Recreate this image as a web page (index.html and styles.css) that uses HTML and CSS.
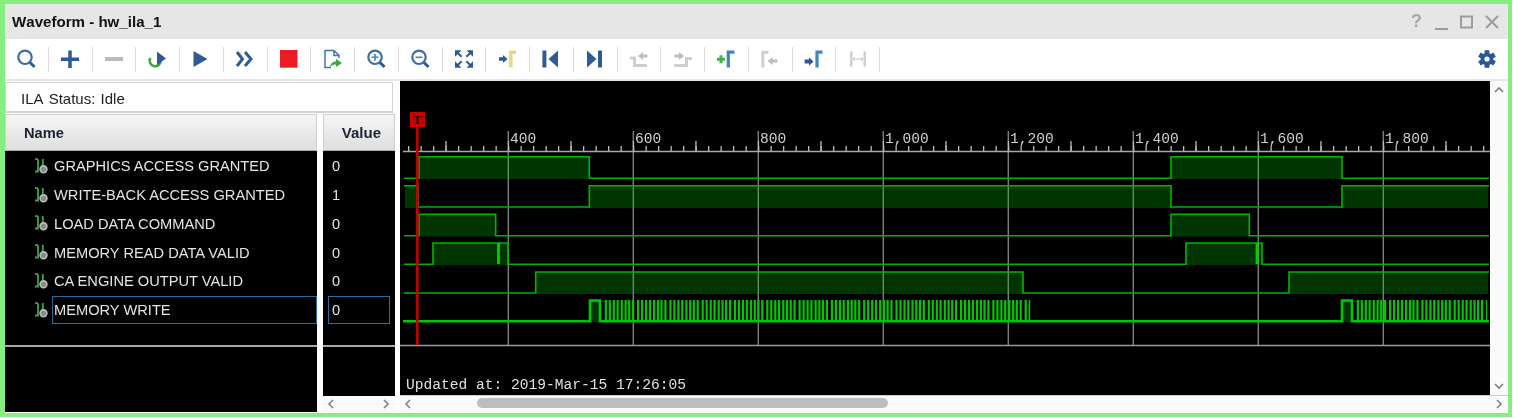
FILE: index.html
```html
<!DOCTYPE html>
<html lang="en">
<head>
<meta charset="utf-8">
<title>Waveform - hw_ila_1</title>
<link rel="stylesheet" href="styles.css">
</head>
<body>
<svg class="defs" aria-hidden="true">
  <symbol id="sig" viewBox="0 0 17 17">
    <path class="sig-g" d="M0 13.5H3V1.2M0 1.2H3M7.8 1V8"/>
    <circle class="sig-c" cx="8.5" cy="11.3" r="3.4"/>
  </symbol>
  <symbol id="mag" viewBox="0 0 22 22">
    <circle class="i-lens" cx="10" cy="9.3" r="6.7"/>
    <path class="i-handle" d="M15 14.5L19.5 19"/>
  </symbol>
  <symbol id="corner" viewBox="0 0 22 22">
    <path class="i-navy" d="M2 2.2H8.5L2 8.7z"/>
    <path class="i-navy-l" d="M4 4.2L8.6 8.8"/>
  </symbol>
</svg>
<div class="window">
  <header class="title">
    <span class="title-text">Waveform - hw_ila_1</span>
    <div class="controls">
      <span class="help">?</span>
      <svg class="ctl" viewBox="0 0 25 22"><path d="M6 18H19"/></svg>
      <svg class="ctl" viewBox="0 0 25 22"><rect x="7" y="5.5" width="11" height="11"/></svg>
      <svg class="ctl" viewBox="0 0 25 22"><path d="M7 5L19 17M19 5L7 17"/></svg>
    </div>
  </header>
  <nav class="toolbar">
    <div class="tool"><svg class="ic" viewBox="0 0 22 22"><use href="#mag"/></svg></div>
    <div class="tool"><svg class="ic" viewBox="0 0 22 22"><path class="i-stroke" d="M2 11.3H20M11 2.5V20"/></svg></div>
    <div class="tool"><svg class="ic" viewBox="0 0 22 22"><rect class="i-gray" x="2" y="9" width="18" height="4"/></svg></div>
    <div class="tool"><svg class="ic" viewBox="0 0 22 22"><path class="i-green-l" d="M13.6 12A5.5 5.5 0 1 1 3.4 10"/><path class="i-navy" d="M10 3.5L19 10.5L10 17z"/></svg></div>
    <div class="tool"><svg class="ic" viewBox="0 0 22 22"><path class="i-navy" d="M3.5 3L17.5 11L3.5 19z"/></svg></div>
    <div class="tool"><svg class="ic" viewBox="0 0 22 22"><path class="i-chev" d="M3 4L8.5 11L3 18M11 4L17 11L11 18"/></svg></div>
    <div class="tool"><svg class="ic" viewBox="0 0 22 22"><rect class="i-red" x="2" y="2" width="17.5" height="17.7"/></svg></div>
    <div class="tool"><svg class="ic" viewBox="0 0 22 22"><path class="i-page" d="M9 19.5H3V2.5H12L17 7.5V10M12 2.5V7.5H17"/><path class="i-green" d="M8 19C8.5 15.5 11 13.5 14 13.5V11L20 15L14 19V16.5C12 16.5 10 17 8 19z"/></svg></div>
    <div class="tool"><svg class="ic" viewBox="0 0 22 22"><use href="#mag"/><path class="i-thin" d="M6.5 9.3H13.5M10 5.8V12.8"/></svg></div>
    <div class="tool"><svg class="ic" viewBox="0 0 22 22"><use href="#mag"/><path class="i-thin" d="M6.5 9.3H13.5"/></svg></div>
    <div class="tool"><svg class="ic" viewBox="0 0 22 22"><use href="#corner"/><use href="#corner" transform="matrix(-1 0 0 1 22 0)"/><use href="#corner" transform="matrix(1 0 0 -1 0 22)"/><use href="#corner" transform="matrix(-1 0 0 -1 22 22)"/></svg></div>
    <div class="tool"><svg class="ic" viewBox="0 0 22 22"><path class="i-navy" d="M2 9.3H6V7L10.5 11L6 15V12.7H2z"/><path class="i-yellow" d="M13.8 19.5V4.2H19"/></svg></div>
    <div class="tool"><svg class="ic" viewBox="0 0 22 22"><rect class="i-navy" x="2.4" y="2.5" width="4" height="17"/><path class="i-navy" d="M18 2.5V19.5L8.5 11z"/></svg></div>
    <div class="tool"><svg class="ic" viewBox="0 0 22 22"><path class="i-navy" d="M3 2.5V19.5L12.5 11z"/><rect class="i-navy" x="14" y="2.5" width="4" height="17"/></svg></div>
    <div class="tool"><svg class="ic" viewBox="0 0 22 22"><path class="i-gray-l" d="M2 10H6.5V17.5H19"/><path class="i-lgray" d="M19.5 6.5H15V4L10 8L15 12V9.5H19.5z"/></svg></div>
    <div class="tool"><svg class="ic" viewBox="0 0 22 22"><path class="i-gray-l" d="M2 17.5H14.5V10.5H20"/><path class="i-lgray" d="M2.5 6.5H7V4L12 8L7 12V9.5H2.5z"/></svg></div>
    <div class="tool"><svg class="ic" viewBox="0 0 22 22"><path class="i-plus" d="M2 11.3H10M6 7.3V15.3"/><path class="i-blue" d="M13.3 19.5V4.2H19.5"/></svg></div>
    <div class="tool"><svg class="ic" viewBox="0 0 22 22"><path class="i-gray-l" d="M3.8 19.5V4.2H9.5"/><path class="i-lgray" d="M18.5 11.5H13.5V9L8.5 13L13.5 17V14.5H18.5z"/></svg></div>
    <div class="tool"><svg class="ic" viewBox="0 0 22 22"><path class="i-navy" d="M1.6 11.5H6V9.2L10.5 13.5L6 17.8V15.5H1.6z"/><path class="i-blue" d="M14 19.5V4.2H19.5"/></svg></div>
    <div class="tool"><svg class="ic" viewBox="0 0 22 22"><path class="i-gray-m" d="M3 3.5H5.5V18.5H3zM16.5 3.5H19V18.5H16.5z"/><path class="i-gray-t" d="M6 11H16M8 9L6 11L8 13M14 9L16 11L14 13"/></svg></div>
    <svg class="gear" viewBox="0 0 18 18">
      <g class="gear-teeth"><rect x="6.6" y="0.2" width="4.8" height="17.6"/><rect x="6.6" y="0.2" width="4.8" height="17.6" transform="rotate(60 9 9)"/><rect x="6.6" y="0.2" width="4.8" height="17.6" transform="rotate(120 9 9)"/></g>
      <circle class="gear-body" cx="9" cy="9" r="6.3"/>
      <circle class="gear-hole" cx="9" cy="9" r="2.6"/>
    </svg>
  </nav>
  <main class="main">
    <section class="left">
      <div class="status">ILA Status: Idle</div>
      <div class="cols">
        <div class="col col-name">
          <div class="head head-name">Name</div>
          <div class="list">
            <div class="row"><svg class="sig"><use href="#sig"/></svg><span class="label">GRAPHICS ACCESS GRANTED</span></div>
            <div class="row"><svg class="sig"><use href="#sig"/></svg><span class="label">WRITE-BACK ACCESS GRANTED</span></div>
            <div class="row"><svg class="sig"><use href="#sig"/></svg><span class="label">LOAD DATA COMMAND</span></div>
            <div class="row"><svg class="sig"><use href="#sig"/></svg><span class="label">MEMORY READ DATA VALID</span></div>
            <div class="row"><svg class="sig"><use href="#sig"/></svg><span class="label">CA ENGINE OUTPUT VALID</span></div>
            <div class="row"><svg class="sig"><use href="#sig"/></svg><span class="label selected">MEMORY WRITE</span></div>
            <div class="divider"></div>
          </div>
        </div>
        <div class="col col-value">
          <div class="head head-value">Value</div>
          <div class="list">
            <div class="row vrow"><span class="cell">0</span></div>
            <div class="row vrow"><span class="cell">1</span></div>
            <div class="row vrow"><span class="cell">0</span></div>
            <div class="row vrow"><span class="cell">0</span></div>
            <div class="row vrow"><span class="cell">0</span></div>
            <div class="row vrow"><span class="cell selected">0</span></div>
            <div class="divider"></div>
          </div>
          <div class="hbar hbar-small">
            <svg class="chev" viewBox="0 0 16 16"><path d="M10 4L6 8L10 12"/></svg>
            <svg class="chev" viewBox="0 0 16 16"><path d="M6 4L10 8L6 12"/></svg>
          </div>
        </div>
      </div>
    </section>
    <section class="wavecol">
      <div class="waverow">
        <svg class="wave" viewBox="400 81 1090 314">
          <path class="grid" d="M508.3 131V345M633.3 131V345M758.3 131V345M883.3 131V345M1008.3 131V345M1133.3 131V345M1258.3 131V345M1383.3 131V345"/>
          <path class="axis" d="M403 151.5H1490"/>
          <line class="tick" x1="408" y1="148.5" x2="1490" y2="148.5"/>
          <line class="tick-big" x1="445.3" y1="146" x2="1490" y2="146"/>
          <g class="ruler">
            <text x="510" y="143">400</text>
            <text x="635" y="143">600</text>
            <text x="760" y="143">800</text>
            <text x="885" y="143">1,000</text>
            <text x="1010" y="143">1,200</text>
            <text x="1135" y="143">1,400</text>
            <text x="1260" y="143">1,600</text>
            <text x="1385" y="143">1,800</text>
          </g>
          <path class="fill" d="M419 157H589V179H419zM1171 157H1342V179H1171zM405 186H418V208H405zM589 186H1171V208H589zM1342 186H1488V208H1342zM419 214.5H496V236.5H419zM1171 214.5H1249V236.5H1171zM433 243H508V265H433zM1186 243H1262V265H1186zM536 272H1023V294H536zM1289 272H1488V294H1289zM590 300H600V322H590zM1342 300H1352V322H1342z"/>
          <path class="trace" d="M404 178.3H419V156.8H589.3V178.3H1171V156.8H1342V178.3H1489"/>
          <path class="trace" d="M404 185.7H418V207H589.3V185.7H1171V207H1342V185.7H1489"/>
          <path class="trace" d="M404 235.7H419V214.3H495.7V235.7H1171V214.3H1249.3V235.7H1489"/>
          <path class="trace" d="M404 264.3H433V243H508V264.3H1186V243H1262V264.3H1489"/>
          <path class="trace" d="M404 293H535.7V272H1023V293H1289V272H1489"/>
          <path class="glitch" d="M498.5 243V264M1257 243V264"/>
          <path class="trace-bold" d="M403 321.3H590V300.5H600V321.3H1342V300.5H1352V321.3H1489"/>
          <line class="burst" x1="604.7" y1="310.5" x2="1030.2" y2="310.5"/>
          <line class="burst" x1="1356.7" y1="310.5" x2="1487.2" y2="310.5"/>
          <path class="base" d="M400 345.5H1490"/>
          <rect class="cursor-flag" x="410" y="112" width="15" height="15"/>
          <text class="cursor-t" x="417.5" y="124">T</text>
          <path class="cursor" d="M417.3 127V345"/>
          <text class="updated" x="406" y="389">Updated at: 2019-Mar-15 17:26:05</text>
        </svg>
        <div class="vbar">
          <svg class="chev" viewBox="0 0 16 16"><path d="M4 10L8 6L12 10"/></svg>
          <svg class="chev" viewBox="0 0 16 16"><path d="M4 6L8 10L12 6"/></svg>
        </div>
      </div>
      <div class="hbar">
        <svg class="chev" viewBox="0 0 16 16"><path d="M10 4L6 8L10 12"/></svg>
        <div class="thumb"></div>
        <svg class="chev chev-end" viewBox="0 0 16 16"><path d="M6 4L10 8L6 12"/></svg>
      </div>
    </section>
  </main>
</div>
</body>
</html>
```
FILE: styles.css
```css
* { box-sizing: border-box; }
html, body { margin: 0; padding: 0; background: #fff; }
body { font-family: "Liberation Sans", Arial, sans-serif; overflow: hidden; }
.defs { display: none; }

.window {
  width: 1512px;
  height: 417px;
  display: flex;
  flex-direction: column;
  border-style: solid;
  border-color: #86ee7f;
  border-width: 4px 4px 4px 5px;
  background: #fff;
  filter: blur(0.4px);
}

.title {
  height: 35px;
  flex: none;
  background: #e6e6e6;
  display: flex;
  align-items: center;
  justify-content: space-between;
  padding: 0 4px 0 7px;
}
.title-text { font-weight: bold; font-size: 15.1px; font-kerning: none; color: #111; }
.controls { display: flex; align-items: center; }
.help { width: 25px; text-align: center; font-weight: bold; font-size: 18px; color: #a8a8a8; }
.ctl { width: 25px; height: 22px; fill: none; stroke: #9c9c9c; stroke-width: 2; }

.toolbar {
  height: 40px;
  flex: none;
  display: flex;
  align-items: center;
  background: #fff;
}
.tool {
  width: 43.75px;
  height: 25px;
  flex: none;
  display: flex;
  align-items: center;
  justify-content: center;
  border-right: 1px solid #dcdcdc;
}
.ic { width: 22px; height: 22px; flex: none; overflow: visible; }
.gear { width: 18px; height: 18px; margin-left: auto; margin-right: 12px; }
.gear-teeth { fill: #2c5796; }
.gear-body { fill: #2c5796; }
.gear-hole { fill: #fff; }

.i-lens { fill: none; stroke: #3b6ea5; stroke-width: 2.2; }
.i-handle { fill: none; stroke: #2f5a96; stroke-width: 3; }
.i-thin { fill: none; stroke: #4b7fae; stroke-width: 1.6; }
.i-stroke { fill: none; stroke: #2f5a96; stroke-width: 3.5; }
.i-gray { fill: #bbb; }
.i-lgray { fill: #bdbdbd; }
.i-gray-l { fill: none; stroke: #cfcfcf; stroke-width: 3; }
.i-gray-m { fill: #cfcfcf; }
.i-gray-t { fill: none; stroke: #c4c4c4; stroke-width: 1; }
.i-green { fill: #3ca83c; }
.i-green-l { fill: none; stroke: #3ca83c; stroke-width: 2.6; }
.i-navy { fill: #2f5a96; }
.i-navy-l { fill: none; stroke: #2f5a96; stroke-width: 2; }
.i-chev { fill: none; stroke: #2f5a96; stroke-width: 3; }
.i-red { fill: #ed1c24; }
.i-page { fill: none; stroke: #4576ad; stroke-width: 1.5; }
.i-yellow { fill: none; stroke: #ead67e; stroke-width: 3.4; }
.i-blue { fill: none; stroke: #3f85bd; stroke-width: 3.2; }
.i-plus { fill: none; stroke: #3fb24a; stroke-width: 3; }

.main {
  flex: 1;
  min-height: 0;
  display: flex;
  gap: 5px;
  border-top: 2px solid #e6e6e6;
  padding-bottom: 1px;
}

.left { width: 390px; flex: none; display: flex; flex-direction: column; }
.status {
  width: 388px;
  height: 31px;
  margin-top: 1px;
  flex: none;
  display: flex;
  align-items: center;
  padding: 2px 0 0 15px;
  font-size: 15px;
  font-kerning: none;
  word-spacing: 1px;
  color: #222;
  background: #fff;
  border: 1px solid #d4d4d4;
  border-bottom-width: 2px;
}
.cols { flex: 1; min-height: 0; display: flex; gap: 6px; margin-top: 1px; }
.col { display: flex; flex-direction: column; }
.col-name { width: 312px; flex: none; }
.col-value { width: 72px; flex: none; }
.head {
  height: 37px;
  flex: none;
  display: flex;
  align-items: center;
  font-weight: bold;
  font-size: 14.7px;
  color: #1b2230;
  background: linear-gradient(#f6f6f6, #dedede);
  border: 1px solid #cfcfcf;
  border-bottom-color: #aaa;
}
.head-name { padding-left: 18px; }
.head-value { justify-content: flex-end; padding-right: 13px; font-size: 15px; }

.list { flex: 1; min-height: 0; background: #000; padding-top: 1px; color: #e4e4e4; font-size: 14.65px; }
.row { height: 28.75px; display: flex; align-items: center; padding-left: 30px; }
.vrow { padding-left: 5px; }
.sig { width: 17px; height: 17px; flex: none; }
.sig-g { fill: none; stroke: #3fa34c; stroke-width: 1.8; }
.sig-c { fill: #8a8a8a; stroke: #bdbdbd; stroke-width: 1.6; }
.label, .cell {
  height: 28px;
  display: flex;
  align-items: center;
  padding-left: 1px;
  border: 1px solid transparent;
  white-space: nowrap;
}
.label { flex: 1; }
.cell { width: 62px; padding-left: 3px; }
.selected { border-color: #2f6c9c; }
.divider { height: 2px; margin-top: 20px; background: #a8a8a8; }

.wavecol { flex: 1; min-width: 0; display: flex; flex-direction: column; }
.waverow { flex: 1; min-height: 0; display: flex; border-bottom: 1px solid #ccc; }
.wave { width: 1090px; height: 314px; flex: none; display: block; background: #000; }
.vbar {
  flex: 1;
  background: #fafafa;
  display: flex;
  flex-direction: column;
  justify-content: space-between;
  align-items: center;
  padding-top: 1px;
  padding-bottom: 1px;
}
.hbar { height: 16px; flex: none; display: flex; align-items: center; background: #fafafa; }
.hbar-small { justify-content: space-between; padding: 0 1px 0 0; }
.chev { width: 16px; height: 16px; flex: none; fill: none; stroke: #808080; stroke-width: 1.6; }
.chev-end { margin-left: auto; margin-right: 1px; }
.thumb { width: 411px; height: 10px; margin-left: 61px; margin-top: -2px; border-radius: 5px; background: #bdbdbd; }

.grid { fill: none; stroke: #7e7e7e; stroke-width: 1.4; }
.axis { fill: none; stroke: #a8a8a8; stroke-width: 1.6; }
.tick { stroke: #bcbcbc; stroke-width: 5; stroke-dasharray: 1.3 11.2; }
.tick-big { stroke: #bcbcbc; stroke-width: 10; stroke-dasharray: 1.3 61.2; }
.ruler text { fill: #cfcfcf; font-family: "Liberation Mono", monospace; font-size: 14.58px; }
.fill { fill: #00c800; fill-opacity: 0.26; }
.trace { fill: none; stroke: #00b400; stroke-width: 1.6; }
.trace-bold { fill: none; stroke: #00c800; stroke-width: 2.6; }
.glitch { fill: none; stroke: #00d000; stroke-width: 2.8; }
.burst {
  stroke: #00c800;
  stroke-width: 21;
  stroke-dasharray: 2.2 1.8 2.2 1.8 2.2 1.6 2.2 2 2.2 1.6 2.2 1.4 2.2 1.7 2.2 2.8;
}
.base { fill: none; stroke: #9a9a9a; stroke-width: 1.5; }
.cursor { fill: none; stroke: #c00000; stroke-width: 2.6; }
.cursor-flag { fill: #c80000; }
.cursor-t { fill: #111; font-family: "Liberation Serif", serif; font-weight: bold; font-size: 13px; text-anchor: middle; }
.updated { fill: #e0e0e0; font-family: "Liberation Mono", monospace; font-size: 14.58px; }
```
